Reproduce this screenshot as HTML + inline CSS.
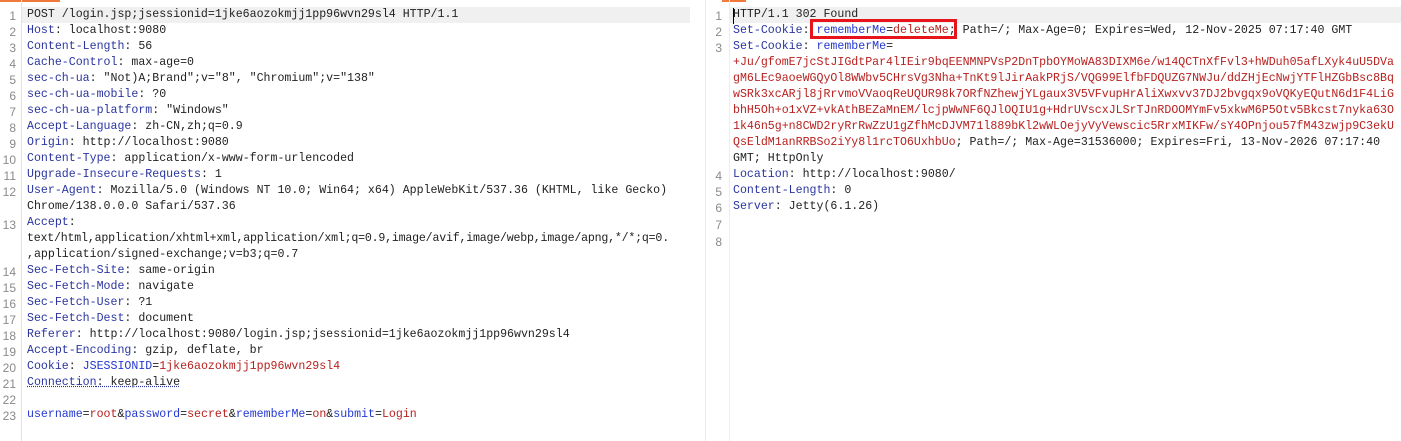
<!DOCTYPE html>
<html><head><meta charset="utf-8"><style>
html,body{margin:0;padding:0;background:#fff;width:1401px;height:441px;overflow:hidden;position:relative}
.pane{position:absolute;top:0;height:441px;overflow:hidden}
.row{position:absolute;white-space:pre;font-family:"Liberation Mono","Noto Sans CJK SC",monospace;font-size:11.6px;line-height:16px;height:16px;color:#222}
.n{position:absolute;width:16px;text-align:right;font-family:"Liberation Sans",sans-serif;font-size:12px;line-height:16px;color:#8a8a8a}
.k{color:#2a35a0}.b{color:#2438d0}.r{color:#b7211f}
</style></head><body>
<div style="position:absolute;left:0;top:0;width:60px;height:2px;background:#f07a3c"></div>
<div style="position:absolute;left:722px;top:0;width:24px;height:2px;background:#f07a3c"></div>
<div style="position:absolute;left:22px;top:7px;width:668px;height:16px;background:#f0f0f0"></div>
<div style="position:absolute;left:729px;top:7px;width:672px;height:16px;background:#f0f0f0"></div>
<div style="position:absolute;left:21px;top:0;width:1px;height:441px;background:#e2e2e2"></div>
<div style="position:absolute;left:705px;top:0;width:1px;height:441px;background:#ececec"></div>
<div style="position:absolute;left:729px;top:0;width:1px;height:441px;background:#eeeeee"></div>
<div class="pane" style="left:0;width:693px">
<div class="n" style="left:0;top:8px">1</div><div class="row" style="left:27px;top:7px">POST /login.jsp;jsessionid=1jke6aozokmjj1pp96wvn29sl4 HTTP/1.1</div>
<div class="n" style="left:0;top:24px">2</div><div class="row" style="left:27px;top:23px"><span class="k">Host</span>: localhost:9080</div>
<div class="n" style="left:0;top:40px">3</div><div class="row" style="left:27px;top:39px"><span class="k">Content-Length</span>: 56</div>
<div class="n" style="left:0;top:56px">4</div><div class="row" style="left:27px;top:55px"><span class="k">Cache-Control</span>: max-age=0</div>
<div class="n" style="left:0;top:72px">5</div><div class="row" style="left:27px;top:71px"><span class="k">sec-ch-ua</span>: "Not)A;Brand";v="8", "Chromium";v="138"</div>
<div class="n" style="left:0;top:88px">6</div><div class="row" style="left:27px;top:87px"><span class="k">sec-ch-ua-mobile</span>: ?0</div>
<div class="n" style="left:0;top:104px">7</div><div class="row" style="left:27px;top:103px"><span class="k">sec-ch-ua-platform</span>: "Windows"</div>
<div class="n" style="left:0;top:120px">8</div><div class="row" style="left:27px;top:119px"><span class="k">Accept-Language</span>: zh-CN,zh;q=0.9</div>
<div class="n" style="left:0;top:136px">9</div><div class="row" style="left:27px;top:135px"><span class="k">Origin</span>: http://localhost:9080</div>
<div class="n" style="left:0;top:152px">10</div><div class="row" style="left:27px;top:151px"><span class="k">Content-Type</span>: application/x-www-form-urlencoded</div>
<div class="n" style="left:0;top:168px">11</div><div class="row" style="left:27px;top:167px"><span class="k">Upgrade-Insecure-Requests</span>: 1</div>
<div class="n" style="left:0;top:184px">12</div><div class="row" style="left:27px;top:183px"><span class="k">User-Agent</span>: Mozilla/5.0 (Windows NT 10.0; Win64; x64) AppleWebKit/537.36 (KHTML, like Gecko)</div>
<div class="row" style="left:27px;top:199px">Chrome/138.0.0.0 Safari/537.36</div>
<div class="n" style="left:0;top:217px">13</div><div class="row" style="left:27px;top:215px"><span class="k">Accept</span>:</div>
<div class="row" style="left:27px;top:231px;letter-spacing:-0.2px">text/html,application/xhtml+xml,application/xml;q=0.9,image/avif,image/webp,image/apng,*/*;q=0.</div>
<div class="row" style="left:27px;top:247px">,application/signed-exchange;v=b3;q=0.7</div>
<div class="n" style="left:0;top:264px">14</div><div class="row" style="left:27px;top:263px"><span class="k">Sec-Fetch-Site</span>: same-origin</div>
<div class="n" style="left:0;top:280px">15</div><div class="row" style="left:27px;top:279px"><span class="k">Sec-Fetch-Mode</span>: navigate</div>
<div class="n" style="left:0;top:296px">16</div><div class="row" style="left:27px;top:295px"><span class="k">Sec-Fetch-User</span>: ?1</div>
<div class="n" style="left:0;top:312px">17</div><div class="row" style="left:27px;top:311px"><span class="k">Sec-Fetch-Dest</span>: document</div>
<div class="n" style="left:0;top:328px">18</div><div class="row" style="left:27px;top:327px"><span class="k">Referer</span>: http://localhost:9080/login.jsp;jsessionid=1jke6aozokmjj1pp96wvn29sl4</div>
<div class="n" style="left:0;top:344px">19</div><div class="row" style="left:27px;top:343px"><span class="k">Accept-Encoding</span>: gzip, deflate, br</div>
<div class="n" style="left:0;top:360px">20</div><div class="row" style="left:27px;top:359px"><span class="k">Cookie</span>: <span class="b">JSESSIONID</span>=<span class="r">1jke6aozokmjj1pp96wvn29sl4</span></div>
<div class="n" style="left:0;top:376px">21</div><div class="row" style="left:27px;top:375px;text-decoration:underline dotted #2a35a0"><span class="k">Connection</span>: keep-alive</div>
<div class="n" style="left:0;top:392px">22</div>
<div class="n" style="left:0;top:408px">23</div><div class="row" style="left:27px;top:407px"><span class="b">username</span>=<span class="r">root</span>&amp;<span class="b">password</span>=<span class="r">secret</span>&amp;<span class="b">rememberMe</span>=<span class="r">on</span>&amp;<span class="b">submit</span>=<span class="r">Login</span></div>
</div>
<div class="pane" style="left:706px;width:695px">
<div class="n" style="left:0;top:8px">1</div><div class="row" style="left:27px;top:7px">HTTP/1.1 302 Found</div>
<div style="position:absolute;left:27px;top:8px;width:1px;height:16px;background:#000"></div>
<div class="n" style="left:0;top:24px">2</div><div class="row" style="left:27px;top:23px"><span class="k">Set-Cookie</span>: <span class="b">rememberMe</span>=<span class="r">deleteMe</span>; Path=/; Max-Age=0; Expires=Wed, 12-Nov-2025 07:17:40 GMT</div>
<div style="position:absolute;left:104px;top:19px;width:141px;height:14px;border:3px solid #e8141c"></div>
<div class="n" style="left:0;top:40px">3</div><div class="row" style="left:27px;top:39px"><span class="k">Set-Cookie</span>: <span class="b">rememberMe</span>=</div>
<div class="row r" style="left:27px;top:55px">+Ju/gfomE7jcStJIGdtPar4lIEir9bqEENMNPVsP2DnTpbOYMoWA83DIXM6e/w14QCTnXfFvl3+hWDuh05afLXyk4uU5DVa</div>
<div class="row r" style="left:27px;top:71px">gM6LEc9aoeWGQyOl8WWbv5CHrsVg3Nha+TnKt9lJirAakPRjS/VQG99ElfbFDQUZG7NWJu/ddZHjEcNwjYTFlHZGbBsc8Bq</div>
<div class="row r" style="left:27px;top:87px">wSRk3xcARjl8jRrvmoVVaoqReUQUR98k7ORfNZhewjYLgaux3V5VFvupHrAliXwxvv37DJ2bvgqx9oVQKyEQutN6d1F4LiG</div>
<div class="row r" style="left:27px;top:103px">bhH5Oh+o1xVZ+vkAthBEZaMnEM/lcjpWwNF6QJlOQIU1g+HdrUVscxJLSrTJnRDOOMYmFv5xkwM6P5Otv5Bkcst7nyka63O</div>
<div class="row r" style="left:27px;top:119px">1k46n5g+n8CWD2ryRrRwZzU1gZfhMcDJVM71l889bKl2wWLOejyVyVewscic5RrxMIKFw/sY4OPnjou57fM43zwjp9C3ekU</div>
<div class="row" style="left:27px;top:135px"><span class="r">QsEldM1anRRBSo2iYy8l1rcTO6UxhbUo</span>; Path=/; Max-Age=31536000; Expires=Fri, 13-Nov-2026 07:17:40</div>
<div class="row" style="left:27px;top:151px">GMT; HttpOnly</div>
<div class="n" style="left:0;top:168px">4</div><div class="row" style="left:27px;top:167px"><span class="k">Location</span>: http://localhost:9080/</div>
<div class="n" style="left:0;top:184px">5</div><div class="row" style="left:27px;top:183px"><span class="k">Content-Length</span>: 0</div>
<div class="n" style="left:0;top:200px">6</div><div class="row" style="left:27px;top:199px"><span class="k">Server</span>: Jetty(6.1.26)</div>
<div class="n" style="left:0;top:217px">7</div>
<div class="n" style="left:0;top:234px">8</div>
</div>
</body></html>
